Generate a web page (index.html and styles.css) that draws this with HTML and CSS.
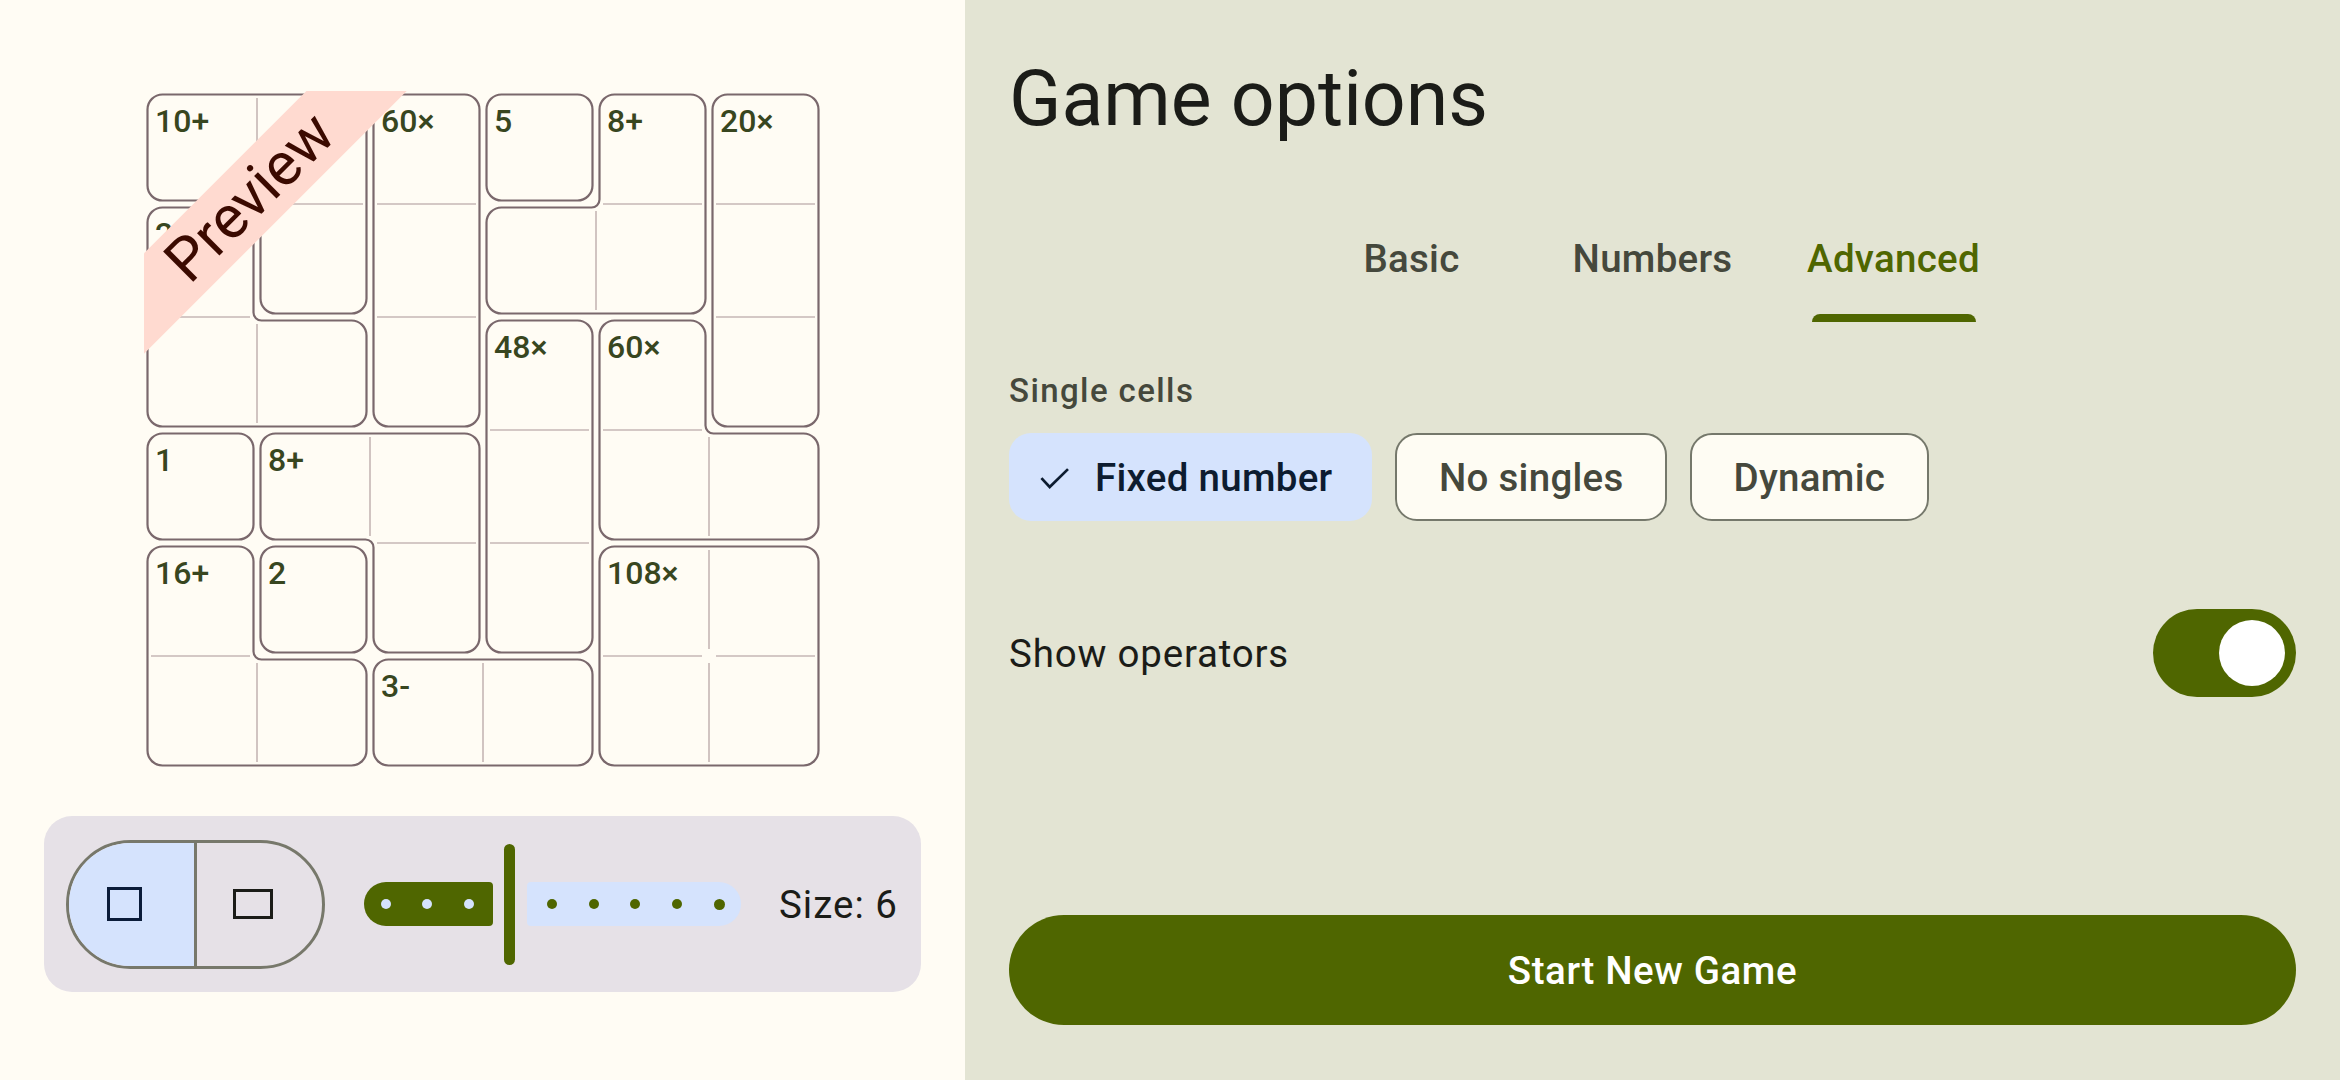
FILE: index.html
```html
<!DOCTYPE html>
<html lang="en">
<head>
<meta charset="utf-8">
<title>Game options</title>
<link rel="stylesheet" href="styles.css">
</head>
<body>
<div class="app">
  <section class="left">
    <div class="board">
      <svg class="cages" viewBox="0 0 678 678" width="678" height="678">
        <path class="inner" d="M113 7V106 M120 113H219 M7 226H106 M113 233V332 M233 113H332 M233 226H332 M452 120V219 M459 113H558 M572 113H671 M572 226H671 M346 339H445 M346 452H445 M459 339H558 M565 346V445 M226 346V445 M233 452H332 M7 565H106 M113 572V671 M339 572V671 M565 459V558 M565 572V671 M459 565H558 M572 565H671"/>
        <g class="outline">
          <path d="M18.5 3.5H207.5A15 15 0 0 1 222.5 18.5V207.5A15 15 0 0 1 207.5 222.5H131.5A15 15 0 0 1 116.5 207.5V117.5A8 8 0 0 0 108.5 109.5H18.5A15 15 0 0 1 3.5 94.5V18.5A15 15 0 0 1 18.5 3.5Z"/>
          <path d="M18.5 116.5H94.5A15 15 0 0 1 109.5 131.5V221.5A8 8 0 0 0 117.5 229.5H207.5A15 15 0 0 1 222.5 244.5V320.5A15 15 0 0 1 207.5 335.5H18.5A15 15 0 0 1 3.5 320.5V131.5A15 15 0 0 1 18.5 116.5Z"/>
          <rect x="229.5" y="3.5" width="106" height="332" rx="15"/>
          <rect x="342.5" y="3.5" width="106" height="106" rx="15"/>
          <path d="M470.5 3.5H546.5A15 15 0 0 1 561.5 18.5V207.5A15 15 0 0 1 546.5 222.5H357.5A15 15 0 0 1 342.5 207.5V131.5A15 15 0 0 1 357.5 116.5H447.5A8 8 0 0 0 455.5 108.5V18.5A15 15 0 0 1 470.5 3.5Z"/>
          <rect x="568.5" y="3.5" width="106" height="332" rx="15"/>
          <rect x="342.5" y="229.5" width="106" height="332" rx="15"/>
          <path d="M470.5 229.5H546.5A15 15 0 0 1 561.5 244.5V334.5A8 8 0 0 0 569.5 342.5H659.5A15 15 0 0 1 674.5 357.5V433.5A15 15 0 0 1 659.5 448.5H470.5A15 15 0 0 1 455.5 433.5V244.5A15 15 0 0 1 470.5 229.5Z"/>
          <rect x="3.5" y="342.5" width="106" height="106" rx="15"/>
          <path d="M131.5 342.5H320.5A15 15 0 0 1 335.5 357.5V546.5A15 15 0 0 1 320.5 561.5H244.5A15 15 0 0 1 229.5 546.5V456.5A8 8 0 0 0 221.5 448.5H131.5A15 15 0 0 1 116.5 433.5V357.5A15 15 0 0 1 131.5 342.5Z"/>
          <path d="M18.5 455.5H94.5A15 15 0 0 1 109.5 470.5V560.5A8 8 0 0 0 117.5 568.5H207.5A15 15 0 0 1 222.5 583.5V659.5A15 15 0 0 1 207.5 674.5H18.5A15 15 0 0 1 3.5 659.5V470.5A15 15 0 0 1 18.5 455.5Z"/>
          <rect x="116.5" y="455.5" width="106" height="106" rx="15"/>
          <rect x="229.5" y="568.5" width="219" height="106" rx="15"/>
          <rect x="455.5" y="455.5" width="219" height="219" rx="15"/>
        </g>
        <g class="labels">
          <text x="11" y="40.7">10+</text>
          <text x="11" y="153.7">24×</text>
          <text x="237" y="40.7">60×</text>
          <text x="350" y="40.7">5</text>
          <text x="463" y="40.7">8+</text>
          <text x="576" y="40.7">20×</text>
          <text x="350" y="266.7">48×</text>
          <text x="463" y="266.7">60×</text>
          <text x="11" y="379.7">1</text>
          <text x="124" y="379.7">8+</text>
          <text x="11" y="492.7">16+</text>
          <text x="124" y="492.7">2</text>
          <text x="463" y="492.7">108×</text>
          <text x="237" y="605.7">3-</text>
        </g>
      </svg>
      <div class="ribbon">Preview</div>
    </div>
    <div class="toolbar">
      <div class="toggle">
        <div class="seg seg-on"><span class="ico ico-square"></span></div>
        <div class="seg"><span class="ico ico-rect"></span></div>
      </div>
      <div class="slider">
        <div class="track track-on"><i></i><i></i><i></i></div>
        <div class="handle"></div>
        <div class="track track-off"><i></i><i></i><i></i><i></i><i class="last"></i></div>
      </div>
      <div class="size">Size: 6</div>
    </div>
  </section>
  <section class="right">
    <h1 class="title">Game options</h1>
    <div class="tabs">
      <div class="tab">Basic</div>
      <div class="tab">Numbers</div>
      <div class="tab tab-on">Advanced<span class="indicator"></span></div>
    </div>
    <div class="label">Single cells</div>
    <div class="chips">
      <div class="chip chip-on">
        <svg class="check" width="30" height="22" viewBox="0 0 30 22"><path d="M2.4 12.1L10.7 21L29 3.1"/></svg>
        <span>Fixed number</span>
      </div>
      <div class="chip">No singles</div>
      <div class="chip">Dynamic</div>
    </div>
    <div class="row">
      <span class="row-text">Show operators</span>
      <div class="switch"><span class="thumb"></span></div>
    </div>
    <div class="start">Start New Game</div>
  </section>
</div>
</body>
</html>
```
FILE: styles.css
```css
html, body {
  margin: 0;
  padding: 0;
}
body {
  font-family: Roboto, "Noto Sans", sans-serif;
  color: #1b1c18;
}
.app {
  display: flex;
  width: 2340px;
  height: 1080px;
  overflow: hidden;
}
.left {
  width: 965px;
  flex: none;
  box-sizing: border-box;
  background: #fffcf4;
  display: flex;
  flex-direction: column;
  align-items: center;
  padding-top: 91px;
}
.board {
  position: relative;
  width: 678px;
  height: 678px;
  overflow: hidden;
  margin-left: 1px;
}
.cages {
  display: block;
}
.inner {
  fill: none;
  stroke: #c6b6b5;
  stroke-width: 1.6;
}
.outline path,
.outline rect {
  fill: none;
  stroke: #7a686c;
  stroke-width: 2.2;
}
.labels text {
  font-family: Roboto, sans-serif;
  font-weight: 500;
  font-size: 32px;
  fill: #38461f;
}
.ribbon {
  position: absolute;
  left: -94px;
  top: 70.65px;
  width: 400px;
  height: 70.7px;
  line-height: 70.7px;
  background: #ffdad0;
  color: #3b0a00;
  font-size: 60px;
  font-weight: 400;
  text-align: center;
  transform: rotate(-45deg);
}
.toolbar {
  margin-top: 47px;
  width: 877px;
  height: 176px;
  box-sizing: border-box;
  background: #e6e1e7;
  border-radius: 28px;
  display: flex;
  align-items: center;
  padding-left: 22px;
}
.toggle {
  width: 259px;
  height: 129px;
  box-sizing: border-box;
  border: 3px solid #77786b;
  border-radius: 65px;
  overflow: hidden;
  display: flex;
}
.seg {
  flex: 1;
  display: flex;
  align-items: center;
  justify-content: center;
  padding-right: 14px;
}
.seg-on {
  background: #d5e3fd;
  border-right: 3px solid #77786b;
}
.ico {
  display: block;
  box-sizing: border-box;
}
.ico-square {
  width: 35px;
  height: 34px;
  border: 3.3px solid #0b1c39;
}
.ico-rect {
  width: 40px;
  height: 30px;
  border: 3.2px solid #1b1c18;
}
.slider {
  display: flex;
  align-items: center;
  margin-left: 39px;
}
.track {
  height: 44px;
  box-sizing: border-box;
  display: flex;
  align-items: center;
  gap: 31.7px;
}
.track i {
  display: block;
  width: 10px;
  height: 10px;
  border-radius: 50%;
  flex: none;
}
.track-on {
  width: 129px;
  background: #4f6600;
  border-radius: 22px 4px 4px 22px;
  padding-left: 16.7px;
}
.track-on i {
  background: #d5e3fd;
}
.track-off {
  width: 214px;
  background: #d5e3fd;
  border-radius: 4px 22px 22px 4px;
  padding-left: 20px;
}
.track-off i {
  background: #4f6600;
}
.track-off i.last {
  width: 11px;
  height: 11px;
}
.handle {
  width: 11px;
  height: 121px;
  border-radius: 6px;
  background: #4f6600;
  margin: 0 12px 0 11px;
}
.size {
  margin-left: 38px;
  font-size: 38.5px;
  letter-spacing: 1px;
  color: #1b1c18;
}
.right {
  flex: 1;
  box-sizing: border-box;
  background: #e3e4d3;
  padding: 50px 44px 55px;
  display: flex;
  flex-direction: column;
}
.title {
  margin: 0;
  font-size: 77px;
  font-weight: 400;
  line-height: 99px;
  color: #1b1c18;
}
.tabs {
  margin-top: 41px;
  display: flex;
  justify-content: center;
}
.tab {
  position: relative;
  width: 241px;
  height: 132px;
  box-sizing: border-box;
  padding-top: 5px;
  display: flex;
  align-items: center;
  justify-content: center;
  font-size: 38.5px;
  font-weight: 500;
  letter-spacing: 0.275px;
  color: #45483c;
}
.tab-on {
  color: #4f6600;
}
.indicator {
  position: absolute;
  left: 50%;
  bottom: 0;
  width: 164px;
  height: 8px;
  margin-left: -82px;
  border-radius: 8px 8px 0 0;
  background: #4f6600;
}
.label {
  margin-top: 49px;
  font-size: 33px;
  font-weight: 500;
  line-height: 39px;
  letter-spacing: 1.4px;
  color: #45483c;
}
.chips {
  margin-top: 23px;
  display: flex;
  gap: 23px;
}
.chip {
  height: 88px;
  box-sizing: border-box;
  border: 2.75px solid #75786b;
  border-radius: 22px;
  background: #fefcf3;
  padding: 0 41.5px;
  display: flex;
  align-items: center;
  font-size: 38.5px;
  font-weight: 500;
  letter-spacing: 0.275px;
  color: #45483c;
}
.chip-on {
  border: none;
  background: #d5e3fd;
  color: #0d1c30;
  padding: 0 40px 0 30px;
  gap: 26px;
}
.check {
  display: block;
  overflow: visible;
}
.check path {
  fill: none;
  stroke: #0d1c30;
  stroke-width: 2.7;
}
.row {
  margin-top: 88px;
  height: 88px;
  display: flex;
  align-items: center;
  justify-content: space-between;
}
.row-text {
  font-size: 38.5px;
  letter-spacing: 0.8px;
  color: #1b1c18;
}
.switch {
  width: 143px;
  height: 88px;
  box-sizing: border-box;
  border-radius: 44px;
  background: #4f6600;
  display: flex;
  align-items: center;
  justify-content: flex-end;
  padding-right: 11px;
}
.thumb {
  display: block;
  width: 66px;
  height: 66px;
  border-radius: 50%;
  background: #ffffff;
}
.start {
  margin-top: auto;
  height: 110px;
  border-radius: 55px;
  background: #4f6600;
  color: #ffffff;
  display: flex;
  align-items: center;
  justify-content: center;
  font-size: 38.5px;
  font-weight: 500;
  letter-spacing: 0.6px;
}
```
